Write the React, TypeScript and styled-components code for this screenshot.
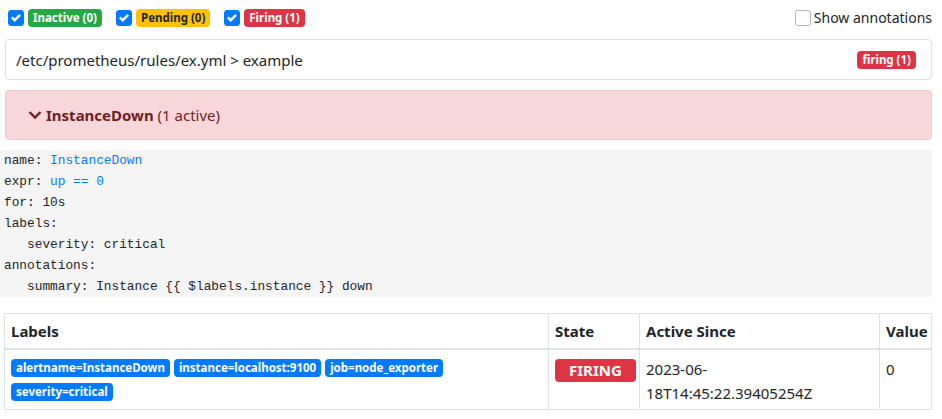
import React from "react";
import styled, { createGlobalStyle } from "styled-components";

const Global = createGlobalStyle`
  html, body { margin: 0; padding: 0; background: #fff; }
  body {
    font-family: "Noto Sans", "Open Sans", sans-serif;
    font-size: 15px;
    line-height: 24px;
    color: #212529;
  }
  * { box-sizing: border-box; }
`;

const Page = styled.div`
  width: 932px;
  display: flex;
  flex-direction: column;
`;

const FilterBar = styled.div`
  display: flex;
  align-items: center;
  justify-content: space-between;
  height: 35px;
  padding: 0 0 0 8px;
`;

const FilterGroup = styled.div`
  display: flex;
  align-items: center;
  gap: 14px;
`;

const Filter = styled.label`
  display: flex;
  align-items: center;
  gap: 4px;
`;

const Check = styled.span<{ $checked?: boolean }>`
  width: 16px;
  height: 16px;
  border-radius: 3px;
  display: inline-flex;
  align-items: center;
  justify-content: center;
  background: ${(p) => (p.$checked ? "#007bff" : "#fff")};
  border: 1px solid ${(p) => (p.$checked ? "#007bff" : "#adb5bd")};
`;

const Badge = styled.span<{ $bg: string; $fg?: string }>`
  display: inline-block;
  font-size: 11.5px;
  font-weight: 700;
  line-height: 12px;
  padding: 3px 5px;
  border-radius: 4px;
  white-space: nowrap;
  background: ${(p) => p.$bg};
  color: ${(p) => p.$fg || "#fff"};
`;

const AnnotToggle = styled.label`
  display: flex;
  align-items: center;
  gap: 3px;
  font-size: 14px;
  color: #212529;
`;

const GroupCard = styled.div`
  margin: 4px 0 0 5px;
  height: 41px;
  border: 1px solid #dfdfdf;
  border-radius: 4px;
  display: flex;
  align-items: center;
  justify-content: space-between;
  padding: 0 15px 0 10px;
`;

const Alert = styled.div`
  margin: 10px 0 0 5px;
  height: 50px;
  background: #f8d7da;
  border: 1px solid #f5c6cb;
  border-radius: 4px;
  color: #721c24;
  display: flex;
  align-items: center;
  padding-left: 22px;
  gap: 4px;
`;

const RuleName = styled.strong`
  font-weight: 700;
`;

const Code = styled.pre`
  margin: 10px 0 0 0;
  padding: 0 4px;
  background: #f5f5f5;
  font-family: "Liberation Mono", monospace;
  font-size: 12.8px;
  line-height: 21px;
  color: #212529;
  height: 147px;
  white-space: pre;
`;

const Blue = styled.span`
  color: #007bff;
`;

const Table = styled.table`
  margin: 16px 0 0 4px;
  width: 928px;
  border-collapse: collapse;
  table-layout: fixed;
  th, td {
    border: 1px solid #dee2e6;
    text-align: left;
    vertical-align: top;
  }
  th {
    font-weight: 700;
    padding: 5px 6px;
    height: 35px;
    vertical-align: middle;
    border-bottom: 2px solid #dee2e6;
  }
  td { padding: 7px 6px 4px; }
`;

const Col = styled.col<{ $w?: number }>`
  width: ${(p) => (p.$w ? `${p.$w}px` : "auto")};
`;

const LabelWrap = styled.div`
  display: flex;
  flex-wrap: wrap;
  gap: 6px 4px;
  margin-top: 2px;
`;

const StateBadge = styled.span`
  display: inline-block;
  background: #dc3545;
  color: #fff;
  font-weight: 700;
  font-size: 15px;
  line-height: 1;
  padding: 4px 14px;
  border-radius: 4px;
  margin-top: 2px;
`;

const CheckIcon = () => (
  <svg width="10" height="10" viewBox="0 0 8 8">
    <path fill="#fff" d="M6.564.75l-3.59 3.612-1.538-1.55L0 4.26l2.974 2.99L8 2.193z" />
  </svg>
);

const Chevron = () => (
  <svg width="14" height="10" viewBox="0 0 14 10">
    <path d="M1.5 2l5.5 5.5L12.5 2" fill="none" stroke="#721c24" strokeWidth="2.4" />
  </svg>
);

export default function App() {
  return (
    <>
      <Global />
      <Page>
        <FilterBar>
          <FilterGroup>
            <Filter>
              <Check $checked><CheckIcon /></Check>
              <Badge $bg="#28a745">Inactive (0)</Badge>
            </Filter>
            <Filter>
              <Check $checked><CheckIcon /></Check>
              <Badge $bg="#ffc107" $fg="#212529">Pending (0)</Badge>
            </Filter>
            <Filter>
              <Check $checked><CheckIcon /></Check>
              <Badge $bg="#dc3545">Firing (1)</Badge>
            </Filter>
          </FilterGroup>
          <AnnotToggle>
            <Check />
            Show annotations
          </AnnotToggle>
        </FilterBar>
        <GroupCard>
          <span>/etc/prometheus/rules/ex.yml &gt; example</span>
          <Badge $bg="#dc3545">firing (1)</Badge>
        </GroupCard>
        <Alert>
          <Chevron />
          <span>
            <RuleName>InstanceDown</RuleName> (1 active)
          </span>
        </Alert>
        <Code>
          {"name: "}<Blue>InstanceDown</Blue>{"\n"}
          {"expr: "}<Blue>up == 0</Blue>{"\n"}
          {"for: 10s\nlabels:\n   severity: critical\nannotations:\n   summary: Instance {{ $labels.instance }} down"}
        </Code>
        <Table>
          <colgroup>
            <Col $w={544} />
            <Col $w={91} />
            <Col $w={240} />
            <Col />
          </colgroup>
          <thead>
            <tr>
              <th>Labels</th>
              <th>State</th>
              <th>Active Since</th>
              <th>Value</th>
            </tr>
          </thead>
          <tbody>
            <tr>
              <td>
                <LabelWrap>
                  <Badge $bg="#007bff">alertname=InstanceDown</Badge>
                  <Badge $bg="#007bff">instance=localhost:9100</Badge>
                  <Badge $bg="#007bff">job=node_exporter</Badge>
                  <Badge $bg="#007bff">severity=critical</Badge>
                </LabelWrap>
              </td>
              <td>
                <StateBadge>FIRING</StateBadge>
              </td>
              <td>2023-06-<br />18T14:45:22.39405254Z</td>
              <td>0</td>
            </tr>
          </tbody>
        </Table>
      </Page>
    </>
  );
}
